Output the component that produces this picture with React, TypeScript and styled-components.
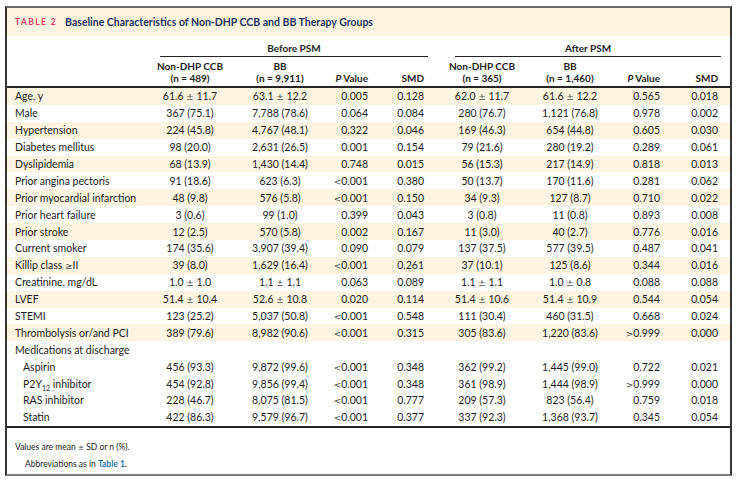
import React from "react";
import styled, { createGlobalStyle } from "styled-components";

const Global = createGlobalStyle`
  html, body { margin: 0; padding: 0; background: #ffffff; }
  body { font-family: "Lato", "Open Sans", sans-serif; color: #1e1e1e; }
`;

const COLS = "143px 80px 100px 42px 56px 14px 80px 96px 46px 58px 1fr";

const Frame = styled.div`
  margin: 6px 0 0 5px;
  width: 727px;
  height: 470px;
  box-sizing: border-box;
  border-top: 2px solid #6b6b6b;
  border-left: 2px solid #353535;
  border-right: 2px solid #353535;
  border-bottom: 2px solid #7a7a7a;
  display: flex;
  flex-direction: column;
  & > * { flex-shrink: 0; }
`;

const TitleBar = styled.div`
  height: 28px;
  background: #fdf5e1;
  display: flex;
  align-items: center;
  padding-left: 8px;
  gap: 8px;
`;

const TableLabel = styled.span`
  color: #e23a5e;
  font-weight: 700;
  font-size: 8.5px;
  letter-spacing: 1.4px;
`;

const TitleText = styled.span`
  color: #1d3563;
  font-weight: 700;
  font-size: 10.5px;
`;

const HeadGrid = styled.div`
  display: grid;
  grid-template-columns: ${COLS};
  border-bottom: 2px solid #232323;
`;

const GroupHead = styled.div<{ $col: string; $ml: number; $mr: number }>`
  grid-column: ${(p) => p.$col};
  grid-row: 1;
  margin: 6px ${(p) => p.$mr}px 0 ${(p) => p.$ml}px;
  padding-bottom: 2px;
  border-bottom: 1px solid #232323;
  text-align: center;
  font-weight: 700;
  font-size: 10px;
  line-height: 12px;
`;

const ColHead = styled.div<{ $align: "center" | "right"; $col: number }>`
  grid-row: 2;
  grid-column: ${(p) => p.$col};
  padding: 3px ${(p) => (p.$align === "right" ? 4 : 0)}px 2px 0;
  display: flex;
  flex-direction: column;
  justify-content: flex-end;
  text-align: ${(p) => p.$align};
  font-weight: 700;
  font-size: 10px;
  line-height: 12px;
`;

const Row = styled.div<{ $shade: boolean }>`
  display: grid;
  grid-template-columns: ${COLS};
  height: 16.9px;
  align-items: center;
  background: ${(p) => (p.$shade ? "#fdf5e1" : "transparent")};
  font-size: 10.5px;
`;

const Body = styled.div`
  border-bottom: 2px solid #232323;
`;

const Label = styled.div<{ $indent: boolean }>`
  padding-left: ${(p) => (p.$indent ? 16 : 8)}px;
  white-space: nowrap;
`;

const Sub = styled.sub`
  font-size: 7px;
  line-height: 0;
`;

const Cell = styled.div<{ $align: "center" | "right" }>`
  text-align: ${(p) => p.$align};
  padding-right: ${(p) => (p.$align === "right" ? 4 : 0)}px;
  white-space: nowrap;
`;

const Sym = styled.span`
  color: #4a4a4a;
  font-family: "DejaVu Sans", sans-serif;
  font-size: 0.85em;
`;

const Footer = styled.div`
  padding: 13px 0 0 8px;
  font-size: 8.5px;
  line-height: 13px;
  display: flex;
  flex-direction: column;
  gap: 4px;
`;

const FootLine = styled.div<{ $indent?: boolean }>`
  padding-left: ${(p) => (p.$indent ? 10 : 0)}px;
`;

const Link = styled.span`
  color: #2476b5;
  font-weight: 700;
`;

type R = { label: React.ReactNode; v: string[]; indent?: boolean };

const rows: R[] = [
  { label: "Age, y", v: ["61.6 ± 11.7", "63.1 ± 12.2", "0.005", "0.128", "62.0 ± 11.7", "61.6 ± 12.2", "0.565", "0.018"] },
  { label: "Male", v: ["367 (75.1)", "7,788 (78.6)", "0.064", "0.084", "280 (76.7)", "1,121 (76.8)", "0.978", "0.002"] },
  { label: "Hypertension", v: ["224 (45.8)", "4,767 (48.1)", "0.322", "0.046", "169 (46.3)", "654 (44.8)", "0.605", "0.030"] },
  { label: "Diabetes mellitus", v: ["98 (20.0)", "2,631 (26.5)", "0.001", "0.154", "79 (21.6)", "280 (19.2)", "0.289", "0.061"] },
  { label: "Dyslipidemia", v: ["68 (13.9)", "1,430 (14.4)", "0.748", "0.015", "56 (15.3)", "217 (14.9)", "0.818", "0.013"] },
  { label: "Prior angina pectoris", v: ["91 (18.6)", "623 (6.3)", "<0.001", "0.380", "50 (13.7)", "170 (11.6)", "0.281", "0.062"] },
  { label: "Prior myocardial infarction", v: ["48 (9.8)", "576 (5.8)", "<0.001", "0.150", "34 (9.3)", "127 (8.7)", "0.710", "0.022"] },
  { label: "Prior heart failure", v: ["3 (0.6)", "99 (1.0)", "0.399", "0.043", "3 (0.8)", "11 (0.8)", "0.893", "0.008"] },
  { label: "Prior stroke", v: ["12 (2.5)", "570 (5.8)", "0.002", "0.167", "11 (3.0)", "40 (2.7)", "0.776", "0.016"] },
  { label: "Current smoker", v: ["174 (35.6)", "3,907 (39.4)", "0.090", "0.079", "137 (37.5)", "577 (39.5)", "0.487", "0.041"] },
  { label: (<>Killip class <Sym>≥</Sym>II</>), v: ["39 (8.0)", "1,629 (16.4)", "<0.001", "0.261", "37 (10.1)", "125 (8.6)", "0.344", "0.016"] },
  { label: "Creatinine, mg/dL", v: ["1.0 ± 1.0", "1.1 ± 1.1", "0.063", "0.089", "1.1 ± 1.1", "1.0 ± 0.8", "0.088", "0.088"] },
  { label: "LVEF", v: ["51.4 ± 10.4", "52.6 ± 10.8", "0.020", "0.114", "51.4 ± 10.6", "51.4 ± 10.9", "0.544", "0.054"] },
  { label: "STEMI", v: ["123 (25.2)", "5,037 (50.8)", "<0.001", "0.548", "111 (30.4)", "460 (31.5)", "0.668", "0.024"] },
  { label: "Thrombolysis or/and PCI", v: ["389 (79.6)", "8,982 (90.6)", "<0.001", "0.315", "305 (83.6)", "1,220 (83.6)", ">0.999", "0.000"] },
  { label: "Medications at discharge", v: ["", "", "", "", "", "", "", ""] },
  { label: "Aspirin", indent: true, v: ["456 (93.3)", "9,872 (99.6)", "<0.001", "0.348", "362 (99.2)", "1,445 (99.0)", "0.722", "0.021"] },
  { label: (<>P2Y<Sub>12</Sub> inhibitor</>), indent: true, v: ["454 (92.8)", "9,856 (99.4)", "<0.001", "0.348", "361 (98.9)", "1,444 (98.9)", ">0.999", "0.000"] },
  { label: "RAS inhibitor", indent: true, v: ["228 (46.7)", "8,075 (81.5)", "<0.001", "0.777", "209 (57.3)", "823 (56.4)", "0.759", "0.018"] },
  { label: "Statin", indent: true, v: ["422 (86.3)", "9,579 (96.7)", "<0.001", "0.377", "337 (92.3)", "1,368 (93.7)", "0.345", "0.054"] },
];

const fmt = (s: string) => {
  if (s.startsWith("<") || s.startsWith(">")) {
    return (<><Sym>{s[0]}</Sym>{s.slice(1)}</>);
  }
  if (s.includes("±")) {
    const [a, b] = s.split("±");
    return (<>{a}<Sym>±</Sym>{b}</>);
  }
  return s;
};

const aligns: ("center" | "right")[] = ["center", "center", "right", "right", "center", "center", "right", "right"];

const PHead = () => (<><i>P</i> Value</>);

export default function App() {
  return (
    <>
      <Global />
      <Frame>
        <TitleBar>
          <TableLabel>TABLE 2</TableLabel>
          <TitleText>Baseline Characteristics of Non-DHP CCB and BB Therapy Groups</TitleText>
        </TitleBar>
        <HeadGrid>
          <GroupHead $col="2 / 6" $ml={10} $mr={0}>Before PSM</GroupHead>
          <GroupHead $col="7 / 11" $ml={13} $mr={1}>After PSM</GroupHead>
          <ColHead $align="center" $col={2}><span>Non-DHP CCB</span><span>(n = 489)</span></ColHead>
          <ColHead $align="center" $col={3}><span>BB</span><span>(n = 9,911)</span></ColHead>
          <ColHead $align="right" $col={4}><span><PHead /></span></ColHead>
          <ColHead $align="right" $col={5}><span>SMD</span></ColHead>
          <ColHead $align="center" $col={7}><span>Non-DHP CCB</span><span>(n = 365)</span></ColHead>
          <ColHead $align="center" $col={8}><span>BB</span><span>(n = 1,460)</span></ColHead>
          <ColHead $align="right" $col={9}><span><PHead /></span></ColHead>
          <ColHead $align="right" $col={10}><span>SMD</span></ColHead>
        </HeadGrid>
        <Body>
          {rows.map((r, i) => (
            <Row key={i} $shade={i < 15 && i % 2 === 0}>
              <Label $indent={!!r.indent}>{r.label}</Label>
              {r.v.slice(0, 4).map((s, j) => (
                <Cell key={j} $align={aligns[j]}>{fmt(s)}</Cell>
              ))}
              <div />
              {r.v.slice(4).map((s, j) => (
                <Cell key={j + 4} $align={aligns[j + 4]}>{fmt(s)}</Cell>
              ))}
            </Row>
          ))}
        </Body>
        <Footer>
          <FootLine>Values are mean <Sym>±</Sym> SD or n (%).</FootLine>
          <FootLine $indent>Abbreviations as in <Link>Table 1</Link>.</FootLine>
        </Footer>
      </Frame>
    </>
  );
}
